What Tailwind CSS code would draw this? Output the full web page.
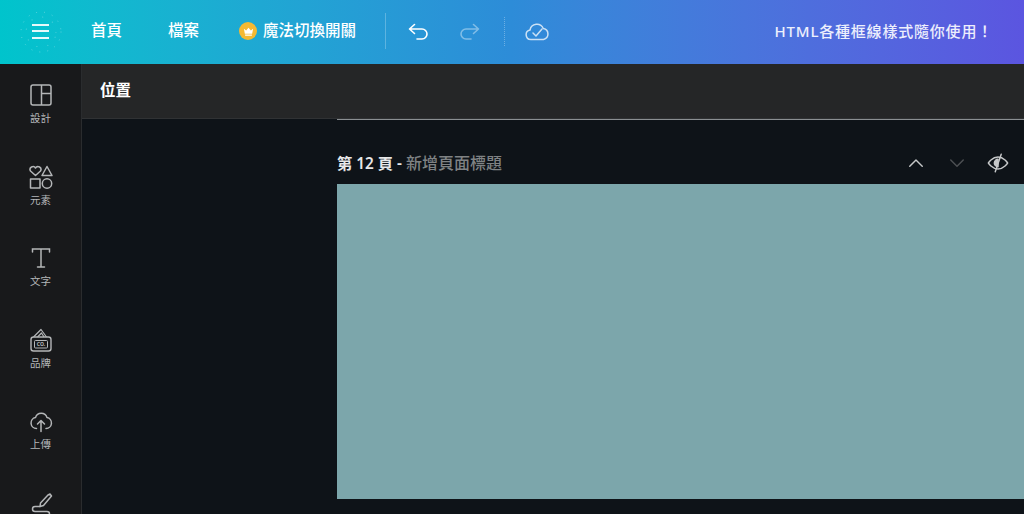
<!DOCTYPE html>
<html lang="zh-Hant">
<head>
<meta charset="utf-8">
<script src="https://cdn.jsdelivr.net/npm/@tailwindcss/browser@4"></script>
</head>
<body class="h-[514px] w-[1024px] overflow-hidden bg-[#0e1318] font-['Noto_Sans','Noto_Sans_CJK_TC',sans-serif]">
<header class="flex h-[64px] items-center bg-gradient-to-r from-[#00c4cc] via-[#2d8cd8] via-50% to-[#5b55e0] pb-[2px] text-white">
  <button class="relative ml-[32px] flex h-[17px] w-[17px] flex-col justify-between py-[1px]">
    <svg viewBox="0 0 44 44" class="absolute top-[-13px] left-[-13px] h-[44px] w-[44px]" fill="none" stroke="#fff" stroke-opacity="0.35" stroke-linecap="round"><circle cx="22" cy="22" r="20" stroke-dasharray="0.100 8"/><circle cx="22" cy="22" r="15" stroke-dasharray="0.100 11" transform="rotate(20 22 22)"/></svg>
    <span class="h-[2px] w-full bg-white/90"></span><span class="h-[2px] w-full bg-white/90"></span><span class="h-[2px] w-full bg-white/90"></span>
  </button>
  <span class="ml-[42px] w-[31px] text-[15.500px] leading-none font-medium whitespace-nowrap">首頁</span>
  <span class="ml-[46px] w-[31px] text-[15.500px] leading-none font-medium whitespace-nowrap">檔案</span>
  <span class="ml-[40px] flex h-[18px] w-[18px] items-center justify-center rounded-full bg-[#f5b932]">
    <svg viewBox="0 0 12 12" class="h-[11px] w-[11px]" fill="#fff"><path d="M1 3l2.400 2L6 2l2.600 3L11 3l-1 5.500H2zM2.300 9.300h7.400v1.200H2.300z"/></svg>
  </span>
  <span class="ml-[6px] w-[94px] text-[15.500px] leading-none font-medium whitespace-nowrap">魔法切換開關</span>
  <span class="ml-[28px] h-[36px] w-px bg-white/25"></span>
  <svg viewBox="0 0 24 24" class="mt-[1px] ml-[20px] h-[24px] w-[24px]" fill="none" stroke="#fff" stroke-width="1.600" stroke-linecap="round" stroke-linejoin="round"><path d="M8.500 4.500 3.500 9l5 4.500M3.500 9H16a5 5 0 0 1 0 10h-5"/></svg>
  <svg viewBox="0 0 24 24" class="mt-[1px] ml-[28px] h-[24px] w-[24px] opacity-40" fill="none" stroke="#fff" stroke-width="1.600" stroke-linecap="round" stroke-linejoin="round"><path d="M15.500 4.500l5 4.500-5 4.500M20.500 9H8a5 5 0 0 0 0 10h5"/></svg>
  <span class="ml-[22px] h-[29px] w-px border-l border-dotted border-white/30"></span>
  <svg viewBox="0 0 26 24" class="ml-[19px] h-[24px] w-[26px] opacity-75" fill="none" stroke="#fff" stroke-width="1.500" stroke-linecap="round" stroke-linejoin="round"><path d="M6.800 20.500a4.800 4.800 0 0 1-.8-9.500A7 7 0 0 1 19.300 9.500a5.600 5.600 0 0 1 .2 11z"/><path d="M9 14l3 3 6-7"/></svg>
  <span class="mr-[31px] ml-auto text-[15px] leading-none font-medium tracking-[0.800px] whitespace-nowrap text-white/90">HTML各種框線樣式隨你使用！</span>
</header>
<div class="flex h-[450px]">
  <nav class="flex w-[82px] shrink-0 flex-col items-center overflow-hidden border-r border-[#2a2c2e] bg-[#18191b] pt-[19px] text-[#b4b6b8]">
    <div class="flex h-[81.600px] shrink-0 flex-col items-center">
      <svg viewBox="0 0 24 24" class="h-[24px] w-[24px]" fill="none" stroke="currentColor" stroke-width="1.500" stroke-linejoin="round"><rect x="2" y="2" width="20" height="20" rx="2"/><path d="M12.500 2v20M12.500 10.500H22"/></svg>
      <span class="mt-[4px] text-[10.500px] leading-[15px]">設計</span>
    </div>
    <div class="flex h-[81.600px] shrink-0 flex-col items-center">
      <svg viewBox="0 0 24 24" class="h-[24px] w-[24px]" fill="none" stroke="currentColor" stroke-width="1.500" stroke-linejoin="round"><path d="M6.500 10.500 1.500 6a2.900 2.900 0 0 1 5-3 2.900 2.900 0 0 1 5 3z"/><path d="M18 1.500 23 10.500H13z"/><rect x="1.500" y="14" width="9.500" height="9"/><circle cx="18" cy="18.500" r="4.700"/></svg>
      <span class="mt-[4px] text-[10.500px] leading-[15px]">元素</span>
    </div>
    <div class="flex h-[81.600px] shrink-0 flex-col items-center">
      <svg viewBox="0 0 24 24" class="h-[24px] w-[24px]" fill="none" stroke="currentColor" stroke-width="1.500" stroke-linecap="round"><path d="M3.500 6V3H20.500V6M12 3V21M8.500 21H15.500"/></svg>
      <span class="mt-[4px] text-[10.500px] leading-[15px]">文字</span>
    </div>
    <div class="flex h-[81.600px] shrink-0 flex-col items-center">
      <svg viewBox="0 0 24 24" class="h-[24px] w-[24px]" fill="none" stroke="currentColor" stroke-width="1.200" stroke-linejoin="round"><rect x="2" y="9" width="20" height="14" rx="2.500" stroke-width="1.400"/><path d="M4.500 9 12 1.500 17.500 9M8.500 9 12.500 5 15 9"/><rect x="5.500" y="12.500" width="13" height="7.500" rx="1" stroke-width="1"/><text x="12" y="18.300" font-size="5" font-weight="700" text-anchor="middle" fill="currentColor" stroke="none">CO.</text></svg>
      <span class="mt-[4px] text-[10.500px] leading-[15px]">品牌</span>
    </div>
    <div class="flex h-[81.600px] shrink-0 flex-col items-center">
      <svg viewBox="0 0 24 24" class="h-[24px] w-[24px]" fill="none" stroke="currentColor" stroke-width="1.500" stroke-linecap="round" stroke-linejoin="round"><path d="M7.500 19.500a5.500 5.500 0 0 1-1-10.900 6 6 0 0 1 11.500 0 5.500 5.500 0 0 1-1 10.900"/><path d="M12 22.500V11.500M8.500 15 12 11.500 15.500 15"/></svg>
      <span class="mt-[4px] text-[10.500px] leading-[15px]">上傳</span>
    </div>
    <div class="flex h-[81.600px] shrink-0 flex-col items-center">
      <svg viewBox="0 0 24 24" class="h-[24px] w-[24px]" fill="none" stroke="currentColor" stroke-width="1.500" stroke-linecap="round" stroke-linejoin="round"><path d="M19 4 21 3 22.500 5 14.500 14.500 11 15.500 11.500 12z"/><path d="M11 15.500H6a2.500 2.500 0 0 0 0 5H18a2 2 0 0 1 0 5"/></svg>
    </div>
  </nav>
  <div class="flex min-w-0 flex-1 flex-col">
    <div class="flex h-[55px] shrink-0 items-center border-b border-[#303234] bg-[#252627] pl-[18px]">
      <span class="text-[15.500px] leading-none font-semibold text-white">位置</span>
    </div>
    <main class="flex min-h-0 flex-1 flex-col pl-[255px]">
      <div class="h-px shrink-0 bg-[#8b8f92]"></div>
      <div class="flex h-[64px] shrink-0 items-center pt-[22px]">
        <span class="text-[15.300px] leading-none font-semibold whitespace-nowrap text-[#e6e7e8]">第 12 頁 - <span class="text-[16px] font-medium text-[#7f8284]">新增頁面標題</span></span>
        <svg viewBox="0 0 24 24" class="ml-auto h-[20px] w-[20px]" fill="none" stroke="#c6c8c9" stroke-width="1.700" stroke-linecap="round" stroke-linejoin="round"><path d="M4.500 16 12 8.500 19.500 16"/></svg>
        <svg viewBox="0 0 24 24" class="ml-[21px] h-[20px] w-[20px]" fill="none" stroke="#4d5053" stroke-width="1.700" stroke-linecap="round" stroke-linejoin="round"><path d="M4.500 8.500 12 16 19.500 8.500"/></svg>
        <svg viewBox="0 0 24 24" class="mr-[15px] ml-[20px] h-[22px] w-[22px]" fill="none" stroke="#c6c8c9" stroke-width="1.600" stroke-linecap="round" stroke-linejoin="round"><path d="M1.500 12S5.500 5.500 12 5.500 22.500 12 22.500 12 18.500 18.500 12 18.500 1.500 12 1.500 12z"/><path d="M12 8a4 4 0 0 0 0 8z" fill="#c6c8c9"/><path d="M15.500 2.500 9 21.500"/></svg>
      </div>
      <div class="h-[315px] shrink-0 bg-[#7ca6ab]"></div>
    </main>
  </div>
</div>
</body>
</html>
